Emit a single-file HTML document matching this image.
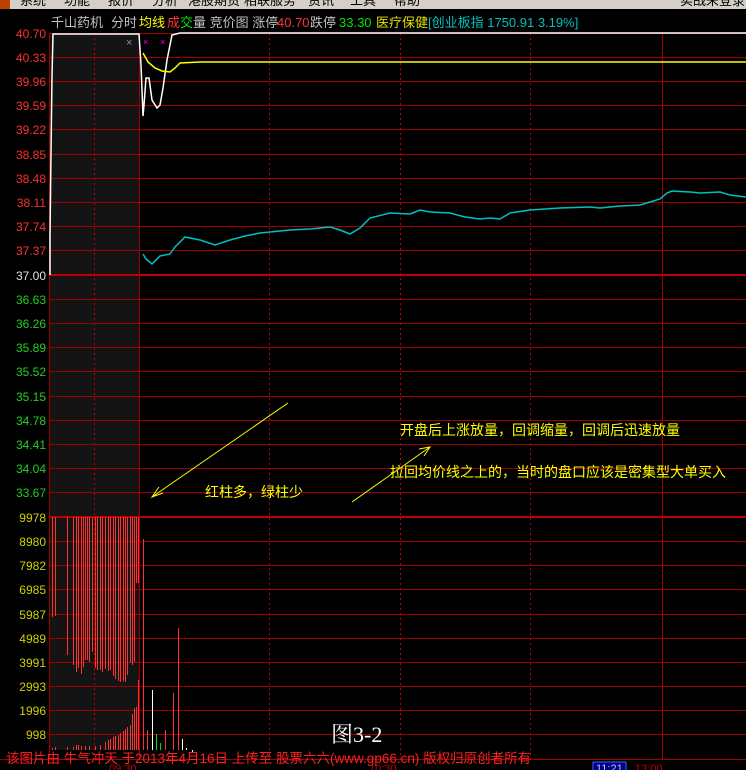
<!DOCTYPE html>
<html><head><meta charset="utf-8"><style>
body{margin:0;width:746px;height:770px;background:#000;overflow:hidden;font-family:"Liberation Sans","Noto Sans CJK SC",sans-serif}
svg{display:block}
</style></head><body>
<svg width="746" height="770" xmlns="http://www.w3.org/2000/svg" font-family="Liberation Sans, Noto Sans CJK SC, sans-serif">
<rect width="746" height="770" fill="#000"/>
<rect x="0" y="0" width="746" height="9" fill="#d4d0c8"/>
<g font-size="13" fill="#000">
<text x="20" y="5">系统</text><text x="64" y="5">功能</text><text x="108" y="5">报价</text><text x="152" y="5">分析</text><text x="188" y="5">港股期货</text><text x="244" y="5">相联服务</text><text x="308" y="5">资讯</text><text x="350" y="5">工具</text><text x="394" y="5">帮助</text><text x="680" y="5">实战未登录</text>
</g>
<rect x="0" y="0" width="10" height="9" fill="#c04000"/>
<g font-size="13">
<text x="51" y="27" fill="#c0c0c0">千山药机</text>
<text x="111" y="27" fill="#c0c0c0">分时</text>
<text x="139" y="27" fill="#ffff00">均线</text>
<text x="167" y="27" fill="#ff3030">成</text><text x="180" y="27" fill="#00e000">交</text><text x="193" y="27" fill="#c0c0c0">量 竞价图 涨停</text>
<text x="277" y="27" fill="#ff3030">40.70</text>
<text x="310" y="27" fill="#c0c0c0">跌停</text>
<text x="339" y="27" fill="#00e000">33.30</text>
<text x="376" y="27" fill="#e0e000">医疗保健</text>
<text x="428" y="27" fill="#00c0c0">[创业板指 1750.91 3.19%]</text>
</g>
<rect x="49" y="33" width="90" height="717" fill="#141414"/>
<g stroke="#a00000" stroke-width="1">
<line x1="49" y1="33.5" x2="746" y2="33.5"/>
<line x1="49" y1="57.5" x2="746" y2="57.5"/><line x1="49" y1="81.5" x2="746" y2="81.5"/><line x1="49" y1="105.5" x2="746" y2="105.5"/><line x1="49" y1="129.5" x2="746" y2="129.5"/><line x1="49" y1="154.5" x2="746" y2="154.5"/><line x1="49" y1="178.5" x2="746" y2="178.5"/><line x1="49" y1="202.5" x2="746" y2="202.5"/><line x1="49" y1="226.5" x2="746" y2="226.5"/><line x1="49" y1="250.5" x2="746" y2="250.5"/>
<line x1="49" y1="299.5" x2="746" y2="299.5"/><line x1="49" y1="323.5" x2="746" y2="323.5"/><line x1="49" y1="347.5" x2="746" y2="347.5"/><line x1="49" y1="371.5" x2="746" y2="371.5"/><line x1="49" y1="396.5" x2="746" y2="396.5"/><line x1="49" y1="420.5" x2="746" y2="420.5"/><line x1="49" y1="444.5" x2="746" y2="444.5"/><line x1="49" y1="468.5" x2="746" y2="468.5"/><line x1="49" y1="492.5" x2="746" y2="492.5"/>
<line x1="49" y1="541.5" x2="746" y2="541.5"/><line x1="49" y1="565.5" x2="746" y2="565.5"/><line x1="49" y1="589.5" x2="746" y2="589.5"/><line x1="49" y1="614.5" x2="746" y2="614.5"/><line x1="49" y1="638.5" x2="746" y2="638.5"/><line x1="49" y1="662.5" x2="746" y2="662.5"/><line x1="49" y1="686.5" x2="746" y2="686.5"/><line x1="49" y1="710.5" x2="746" y2="710.5"/><line x1="49" y1="734.5" x2="746" y2="734.5"/>
<line x1="0" y1="759.5" x2="746" y2="759.5"/>
</g>
<g stroke="#c00000" stroke-width="2"><line x1="49" y1="275" x2="746" y2="275"/><line x1="49" y1="517" x2="746" y2="517"/></g>
<g stroke="#a00000" stroke-width="1">
<line x1="49.5" y1="33" x2="49.5" y2="760"/><line x1="139.5" y1="33" x2="139.5" y2="760"/><line x1="662.5" y1="33" x2="662.5" y2="760"/>
</g>
<g stroke="#c00000" stroke-width="1" stroke-dasharray="2,3">
<line x1="94.5" y1="33" x2="94.5" y2="760"/><line x1="269.5" y1="33" x2="269.5" y2="760"/><line x1="400.5" y1="33" x2="400.5" y2="760"/><line x1="530.5" y1="33" x2="530.5" y2="760"/>
</g>
<g font-size="12" text-anchor="end" fill="#ff3030">
<text x="46" y="38">40.70</text><text x="46" y="62">40.33</text><text x="46" y="86">39.96</text><text x="46" y="110">39.59</text><text x="46" y="134">39.22</text><text x="46" y="159">38.85</text><text x="46" y="183">38.48</text><text x="46" y="207">38.11</text><text x="46" y="231">37.74</text><text x="46" y="255">37.37</text>
</g>
<text x="46" y="280" font-size="12" text-anchor="end" fill="#e0e0e0">37.00</text>
<g font-size="12" text-anchor="end" fill="#20d020">
<text x="46" y="304">36.63</text><text x="46" y="328">36.26</text><text x="46" y="352">35.89</text><text x="46" y="376">35.52</text><text x="46" y="401">35.15</text><text x="46" y="425">34.78</text><text x="46" y="449">34.41</text><text x="46" y="473">34.04</text><text x="46" y="497">33.67</text>
</g>
<g font-size="12" text-anchor="end" fill="#d0d000">
<text x="46" y="522">9978</text><text x="46" y="546">8980</text><text x="46" y="570">7982</text><text x="46" y="594">6985</text><text x="46" y="619">5987</text><text x="46" y="643">4989</text><text x="46" y="667">3991</text><text x="46" y="691">2993</text><text x="46" y="715">1996</text><text x="46" y="739">998</text>
</g>
<polyline fill="none" stroke="#fff" stroke-width="1.5" points="50,275 50,235 51,153 52,76 53,34 139,34 141,65 142,90 143,116 144,105 146,78 147,78 149,78 152,100 157,108 160,105 163,88 167,60 170,45 172,35 180,33 746,33"/>
<polyline fill="none" stroke="#ffff00" stroke-width="1.5" points="143,53 148,62 155,68 162,71 170,72 175,68 180,63 200,62 746,62"/>
<polyline fill="none" stroke="#00c0c0" stroke-width="1.5" points="143,254 146,259 152,264 160,256 170,254 175,247 185,237 200,240 215,245 230,240 245,236 260,233 270,232 290,230 310,229 330,227 340,230 350,234 360,228 370,218 390,213 410,214 420,210 430,212 450,213 465,217 480,219 490,218 500,219 510,213 530,210 560,208 590,207 600,208 620,206 640,205 650,202 660,199 667,193 672,191 690,192 700,193 720,192 730,195 746,197"/>
<g font-size="9" fill="#ff00ff"><text x="143" y="45">×</text><text x="160" y="45">×</text></g>
<text x="126" y="46" font-size="11" fill="#909090">×</text>
<path stroke="#ff3030" stroke-width="1" fill="none" d="M52.5,517V617M55.5,517V616M67.5,517V655M73.5,517V665M76.5,517V672M78.5,517V668M81.5,517V674M83.5,517V667M85.5,517V660M87.5,517V660M89.5,517V662M92.5,517V652M95.5,517V668M97.5,517V670M100.5,517V670M102.5,517V672M105.5,517V669M108.5,517V671M110.5,517V670M113.5,517V676M115.5,517V679M118.5,517V681M120.5,517V682M123.5,517V681M125.5,517V682M127.5,517V675M130.5,517V663M132.5,517V665M134.5,517V662M136.5,517V583M138.5,517V583M52.5,750V748M55.5,750V747M67.5,750V747M73.5,750V747M76.5,750V745M78.5,750V745M81.5,750V746M85.5,750V746M89.5,750V746M95.5,750V746M100.5,750V745M105.5,750V742M108.5,750V740M110.5,750V739M113.5,750V737M115.5,750V736M118.5,750V735M120.5,750V733M123.5,750V731M125.5,750V729M127.5,750V727M130.5,750V725M132.5,750V714M134.5,750V708M136.5,750V707M138.5,750V680M143.5,750V539M147.5,750V730M165.5,750V730M173.5,750V693M178.5,750V628"/>
<path stroke="#fff" stroke-width="1" fill="none" d="M152.5,750V690M182.5,750V739M186.5,750V748M192.5,750V752"/>
<path stroke="#00e000" stroke-width="1" fill="none" d="M156.5,750V734M160.5,750V743"/>
<g stroke="#ffff00" stroke-width="1" fill="none">
<line x1="288" y1="403" x2="152" y2="497"/><polyline points="159,487 152,497 163,493"/>
<line x1="352" y1="502" x2="430" y2="447"/><polyline points="419,449 430,447 424,456"/>
</g>
<g font-size="14" fill="#ffff00">
<text x="400" y="435">开盘后上涨放量，回调缩量，回调后迅速放量</text>
<text x="390" y="477">拉回均价线之上的，当时的盘口应该是密集型大单买入</text>
<text x="205" y="497">红柱多，绿柱少</text>
</g>
<text x="331" y="742" font-size="22" fill="#fff" font-family="Liberation Serif, Noto Serif CJK SC, serif">图3-2</text>
<text x="6" y="763" font-size="13.5" fill="#ff2020">该图片由 牛气冲天 于2013年4月16日 上传至 股票六六(www.gp66.cn) 版权归原创者所有</text>
<g font-size="11" fill="#c00000"><text x="109" y="772">09:30</text><text x="369" y="772">10:30</text><text x="635" y="772">13:00</text></g>
<rect x="593" y="762" width="33" height="9" fill="#000080" stroke="#4060ff"/>
<text x="596" y="772" font-size="11" fill="#c0c0ff">11:21</text>
</svg>
</body></html>
